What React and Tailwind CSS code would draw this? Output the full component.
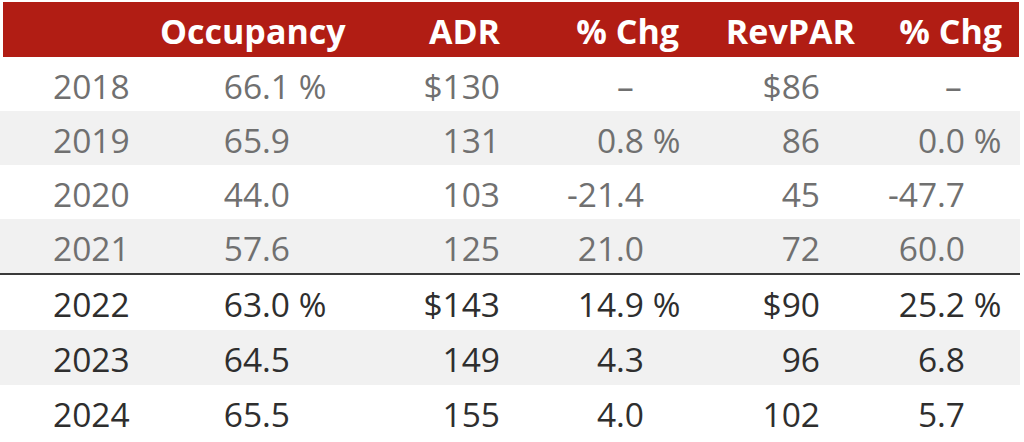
const rows = [
  { y: '2018', occ: '66.1', occS: ' %', adr: '$130', chg: '–', chgS: '', chgDash: true, rev: '$86', chg2: '–', chg2S: '', chg2Dash: true, stripe: false, dark: false },
  { y: '2019', occ: '65.9', adr: '131', chg: '0.8', chgS: ' %', rev: '86', chg2: '0.0', chg2S: ' %', stripe: true, dark: false },
  { y: '2020', occ: '44.0', adr: '103', chg: '-21.4', rev: '45', chg2: '-47.7', stripe: false, dark: false },
  { y: '2021', occ: '57.6', adr: '125', chg: '21.0', rev: '72', chg2: '60.0', stripe: true, dark: false },
  { y: '2022', occ: '63.0', occS: ' %', adr: '$143', chg: '14.9', chgS: ' %', rev: '$90', chg2: '25.2', chg2S: ' %', stripe: false, dark: true },
  { y: '2023', occ: '64.5', adr: '149', chg: '4.3', rev: '96', chg2: '6.8', stripe: true, dark: true },
  { y: '2024', occ: '65.5', adr: '155', chg: '4.0', rev: '102', chg2: '5.7', stripe: false, dark: true },
]

function Row({ r, h }) {
  return (
    <div
      className={`grid grid-cols-[150px_140px_60px_150px_144px_56px_120px_145px_55px] items-center pt-[5px] ${h} ${r.stripe ? 'bg-[#f1f1f1]' : 'bg-white'} ${r.dark ? 'text-[#2e2e2e]' : 'text-[#707070]'}`}
    >
      <div className="pl-[53px]">{r.y}</div>
      <div className="text-right">{r.occ}</div>
      <div className="whitespace-pre">{r.occS || ''}</div>
      <div className="text-right">{r.adr}</div>
      {r.chgDash ? (
        <div className="col-span-2 pl-[117px]">{r.chg}</div>
      ) : (
        <>
          <div className="text-right">{r.chg}</div>
          <div className="whitespace-pre">{r.chgS || ''}</div>
        </>
      )}
      <div className="text-right">{r.rev}</div>
      {r.chg2Dash ? (
        <div className="col-span-2 pl-[125px]">{r.chg2}</div>
      ) : (
        <>
          <div className="text-right">{r.chg2}</div>
          <div className="whitespace-pre">{r.chg2S || ''}</div>
        </>
      )}
    </div>
  )
}

export default function App() {
  return (
    <div className="w-[1024px] h-[442px] bg-white overflow-hidden font-['Open_Sans',sans-serif] text-[33.5px] leading-none">
      <div className="w-[1020px]">
        {/* Header */}
        <div className="pt-[2px] pl-[3px]">
          <div className="h-[55px] w-[1016px] bg-[#b11d14] text-white font-bold text-[34px] grid grid-cols-[157px_190px_150px_179px_176px_147px_17px] items-center pt-[2px]">
            <div />
            <div>Occupancy</div>
            <div className="text-right">ADR</div>
            <div className="text-right">% Chg</div>
            <div className="text-right">RevPAR</div>
            <div className="text-right">% Chg</div>
            <div />
          </div>
        </div>

        {/* Historical */}
        {rows.slice(0, 4).map((r) => (
          <Row key={r.y} r={r} h="h-[54px]" />
        ))}

        <div className="h-[2px] bg-[#3a3a3a]" />

        {/* Forecast */}
        {rows.slice(4).map((r) => (
          <Row key={r.y} r={r} h="h-[55px]" />
        ))}
      </div>
    </div>
  )
}
